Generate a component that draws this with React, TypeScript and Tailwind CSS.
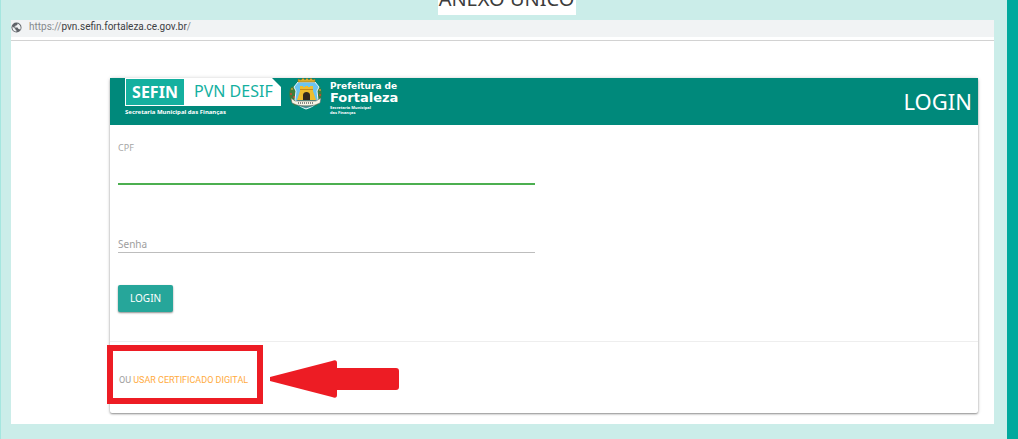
import React, { useState } from 'react';

const App = () => (
  <div className="min-h-screen border-l border-[#a5e6df] bg-[#cbede9] font-['Noto_Sans',sans-serif] flex">
    <main className="flex-1 min-w-0 pl-[10px] pr-[13px] pb-[14px]">
      <div className="h-5">
        <PageTitle />
      </div>
      <div className="bg-white pb-[11px]">
        <AddressBar />
        <LoginCard />
      </div>
    </main>
    <div className="w-[11px] bg-[#00a99d]" />
  </div>
);

const PageTitle = () => (
  <div className="mx-auto flex h-[15px] w-[138px] translate-x-1 items-end justify-center overflow-hidden bg-white">
    <h1 className="text-[20px] leading-8 whitespace-nowrap text-[#3c3c3c]">ANEXO ÚNICO</h1>
  </div>
);

const AddressBar = () => (
  <div className="border-b border-[#d2d2d2] pb-[3px]">
    <div className="flex h-[17px] items-center bg-[#f1f3f4] pb-[3px]">
      <GlobeIcon />
      <span className="ml-[7px] font-[Roboto,sans-serif] text-[10px] leading-[14px] text-[#3c4043]">
        <span className="text-[#85898c]">https://</span>pvn.sefin.fortaleza.ce.gov.br<span className="text-[#85898c]">/</span>
      </span>
    </div>
  </div>
);

const GlobeIcon = () => (
  <svg className="h-[11px] w-[11px]" viewBox="0 0 22 22">
    <circle cx="11" cy="11" r="10" fill="#5f6368" />
    <path d="M3 9 9 14v2l2 1v2C6 19 2 15 3 9Zm10-6v2l-2 2H9v2H7v2h6l2 3h2l1 2c3-4 1-11-5-13Z" fill="#f1f3f4" />
  </svg>
);

const LoginCard = () => {
  const [cpf, setCpf] = useState('');
  const [senha, setSenha] = useState('');

  return (
    <section className="mt-[37px] mr-4 ml-[99px] rounded-[2px] bg-white shadow-[0_1px_2px_rgba(0,0,0,0.4),0_0_4px_rgba(0,0,0,0.14)]">
      <header className="flex h-[47px] items-start bg-[#00897b] pl-[15px] text-white">
        <SefinLogo />
        <FortalezaLogo />
        <h2 className="mt-2 mr-[6px] ml-auto text-[22px] leading-[30px]">LOGIN</h2>
      </header>
      <form onSubmit={(e) => e.preventDefault()} className="h-[217px] border-b border-[#eeeeee] px-2 pt-4">
        <label htmlFor="cpf" className="block text-[9px] leading-[14px] text-[#a6a6a6]">CPF</label>
        <input
          id="cpf"
          type="text"
          value={cpf}
          onChange={(e) => setCpf(e.target.value)}
          className="block h-[30px] w-[49%] border-b-2 border-[#4caf50] text-[10px] outline-none"
        />
        <input
          type="password"
          aria-label="Senha"
          placeholder="Senha"
          value={senha}
          onChange={(e) => setSenha(e.target.value)}
          className="mt-[51px] block h-[17px] w-[49%] border-b border-[#bdbdbd] text-[10px] leading-[14px] outline-none placeholder:text-[#9e9e9e]"
        />
        <button
          type="submit"
          className="mt-8 h-[27px] rounded-[2px] bg-[#26a69a] px-3 text-[10px] text-white shadow-[0_1px_2px_rgba(0,0,0,0.45)]"
        >
          LOGIN
        </button>
      </form>
      <footer className="relative flex h-[71px] items-center pt-1 pl-[9px]">
        <p className="font-[Roboto,sans-serif] text-[9px] leading-[14px] text-[#9e9e9e]">
          OU <a href="#certificado" className="text-[#ffab40]">USAR CERTIFICADO DIGITAL</a>
        </p>
        <div className="pointer-events-none absolute top-[3px] left-[-3px] h-[59px] w-[156px] border-[6px] border-[#ed1c24]" />
        <Arrow />
      </footer>
    </section>
  );
};

const SefinLogo = () => (
  <div className="w-[156px]">
    <div className="flex h-7 bg-white p-px [clip-path:polygon(0_0,147px_0,100%_9px,100%_100%,0_100%)]">
      <span className="flex w-[58px] items-center justify-center bg-[#14b09f] text-[16px] leading-6 font-bold">SEFIN</span>
      <span className="pl-[10px] text-[16px] leading-[25px] whitespace-nowrap text-[#14b09f]">PVN DESIF</span>
    </div>
    <p className="pt-px text-[6px] leading-[10px] font-bold whitespace-nowrap">Secretaria Municipal das Finanças</p>
  </div>
);

const FortalezaLogo = () => (
  <div className="flex pl-[6px]">
    <Crest />
    <div className="pt-[3px] pl-[6px] font-['DejaVu_Sans',sans-serif]">
      <p className="text-[9px] leading-[10px] font-bold">Prefeitura de</p>
      <p className="text-[13px] leading-[14px] font-bold">Fortaleza</p>
      <p className="font-['Noto_Sans',sans-serif] text-[4px] leading-[5px] font-bold">
        Secretaria Municipal<br />das Finanças
      </p>
    </div>
  </div>
);

const Crest = () => (
  <svg className="h-[33px] w-[37px]" viewBox="0 0 37 33">
    <path d="M4 9C1 15 2 22 8 28l4-3L8 8Z" fill="#3f7d3a" />
    <path d="M33 9c3 6 2 13-4 19l-4-3 4-17Z" fill="#3f7d3a" />
    <g fill="#c5a33a">
      <circle cx="5" cy="11" r="1" />
      <circle cx="6" cy="23" r="1" />
      <circle cx="33" cy="12" r="1" />
      <circle cx="30" cy="24" r="1" />
    </g>
    <g fill="#d9412f">
      <circle cx="4" cy="16" r="1" />
      <circle cx="7" cy="19" r="1" />
      <circle cx="33" cy="17" r="1" />
      <circle cx="30" cy="20" r="1" />
    </g>
    <path d="M11 4h17l4 5-2 4 1 9c-2 5-6 7-12 9-5-2-9-4-11-9l1-9-2-4Z" fill="#6cc4f0" stroke="#eef6f5" />
    <path d="M11 4V1l3 1 2-2 2 2 2-2 2 2 2-2 2 2 2-1v3Z" fill="#dcae2b" stroke="#8b6816" strokeWidth=".5" />
    <path d="M13 8h3v1h2V8h3v1h2V8h3v5l3 9H10l3-9Z" fill="#efbd2f" />
    <path d="M13 11h13v1H13Z" fill="#c58a22" />
    <path d="M16 22v-5c0-4 7-4 7 0v5Z" fill="#33291f" />
    <path d="M10 22h19l-3 6-7 2-7-2Z" fill="#4b8c88" />
    <path d="m4 20 4 3h21l5-3-1 5-5 2c-5 1-13 1-18 0l-5-2Z" fill="#f7f5e7" stroke="#65605a" strokeWidth=".5" />
    <path d="M11 25h16" fill="none" stroke="#666" strokeWidth="1.5" strokeDasharray="1 1" />
  </svg>
);

const Arrow = () => (
  <svg className="pointer-events-none absolute top-[18px] left-[160px] h-[38px] w-[129px]" viewBox="0 0 129 38" fill="#ed1c24">
    <path d="M0 17 62 1Q67-1 67 3V8h59q3 0 3 3v16q0 3-3 3H67v5q0 4-5 2L0 21Z" />
  </svg>
);

export default App;
